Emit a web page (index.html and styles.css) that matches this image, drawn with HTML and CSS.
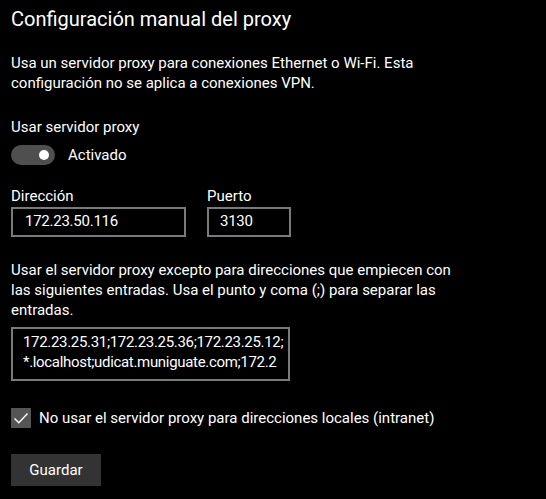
FILE: index.html
```html
<!DOCTYPE html>
<html lang="es">
<head>
<meta charset="utf-8">
<title>Configuración manual del proxy</title>
<link rel="stylesheet" href="styles.css">
</head>
<body>
<main class="page">
  <h1 class="title">Configuración manual del proxy</h1>
  <p class="text intro">Usa un servidor proxy para conexiones Ethernet o Wi-Fi. Esta configuración no se aplica a conexiones VPN.</p>

  <div class="text label-main">Usar servidor proxy</div>
  <div class="toggle-row">
    <span class="toggle"><span class="thumb"></span></span>
    <span class="text">Activado</span>
  </div>

  <div class="fields">
    <div class="field">
      <div class="text">Dirección</div>
      <div class="input addr">172.23.50.116</div>
    </div>
    <div class="field">
      <div class="text">Puerto</div>
      <div class="input port">3130</div>
    </div>
  </div>

  <p class="text except">Usar el servidor proxy excepto para direcciones que empiecen con las siguientes entradas. Usa el punto y coma (;) para separar las entradas.</p>
  <div class="textarea">172.23.25.31;172.23.25.36;172.23.25.12;<br>*.localhost;udicat.muniguate.com;172.2</div>

  <div class="check-row">
    <span class="checkbox">
      <svg width="20" height="20" viewBox="0 0 20 20"><path d="M3.5 10.5 L7.8 14.8 L16.5 5.5" fill="none" stroke="#fff" stroke-width="1.4"/></svg>
    </span>
    <span class="text">No usar el servidor proxy para direcciones locales (intranet)</span>
  </div>

  <button class="btn">Guardar</button>
</main>
</body>
</html>
```
FILE: styles.css
```css
html, body {
  margin: 0;
  background: #000;
  color: #fff;
}
body {
  font-family: Roboto, "Noto Sans", sans-serif;
}
.page {
  padding: 5px 11px 0 11px;
  display: flex;
  flex-direction: column;
  align-items: flex-start;
}
.title {
  margin: 0;
  font-size: 20px;
  font-weight: 400;
  line-height: 28px;
}
.text {
  font-size: 15px;
  line-height: 20px;
}
p.text { margin: 0; }
.intro {
  margin-top: 20px !important;
  width: 430px;
}
.label-main {
  margin-top: 24px;
}
.toggle-row {
  margin-top: 8px;
  display: flex;
  align-items: center;
  gap: 13px;
}
.toggle {
  width: 44px;
  height: 20px;
  border-radius: 10px;
  background: #4f4f4f;
  display: flex;
  align-items: center;
  justify-content: flex-end;
  padding-right: 6px;
  box-sizing: border-box;
}
.thumb {
  width: 10px;
  height: 10px;
  border-radius: 50%;
  background: #fff;
}
.fields {
  margin-top: 21px;
  display: flex;
  gap: 21px;
}
.field {
  display: flex;
  flex-direction: column;
  gap: 1px;
}
.input {
  height: 30px;
  box-sizing: border-box;
  border: 2px solid #7a7a7a;
  font-size: 15px;
  line-height: 20px;
  letter-spacing: -0.25px;
  padding: 2px 10px 0 12px;
}
.addr { width: 175px; }
.port { width: 84px; padding-left: 11px; }
.except {
  margin-top: 23px !important;
  width: 445px;
}
.textarea {
  margin-top: 7px;
  width: 279px;
  height: 54px;
  box-sizing: border-box;
  border: 2px solid #7a7a7a;
  padding: 3px 0 0 10px;
  font-size: 15px;
  line-height: 20px;
  letter-spacing: -0.32px;
  white-space: nowrap;
  overflow: hidden;
}
.check-row {
  margin-top: 27px;
  display: flex;
  align-items: center;
  gap: 8px;
}
.checkbox {
  width: 20px;
  height: 20px;
  background: #555;
  display: block;
}
.checkbox svg { display: block; }
.btn {
  margin-top: 26px;
  width: 90px;
  height: 32px;
  border: 0;
  background: #333;
  color: #fff;
  font-family: inherit;
  font-size: 15px;
  line-height: 20px;
  padding: 0;
}
```
